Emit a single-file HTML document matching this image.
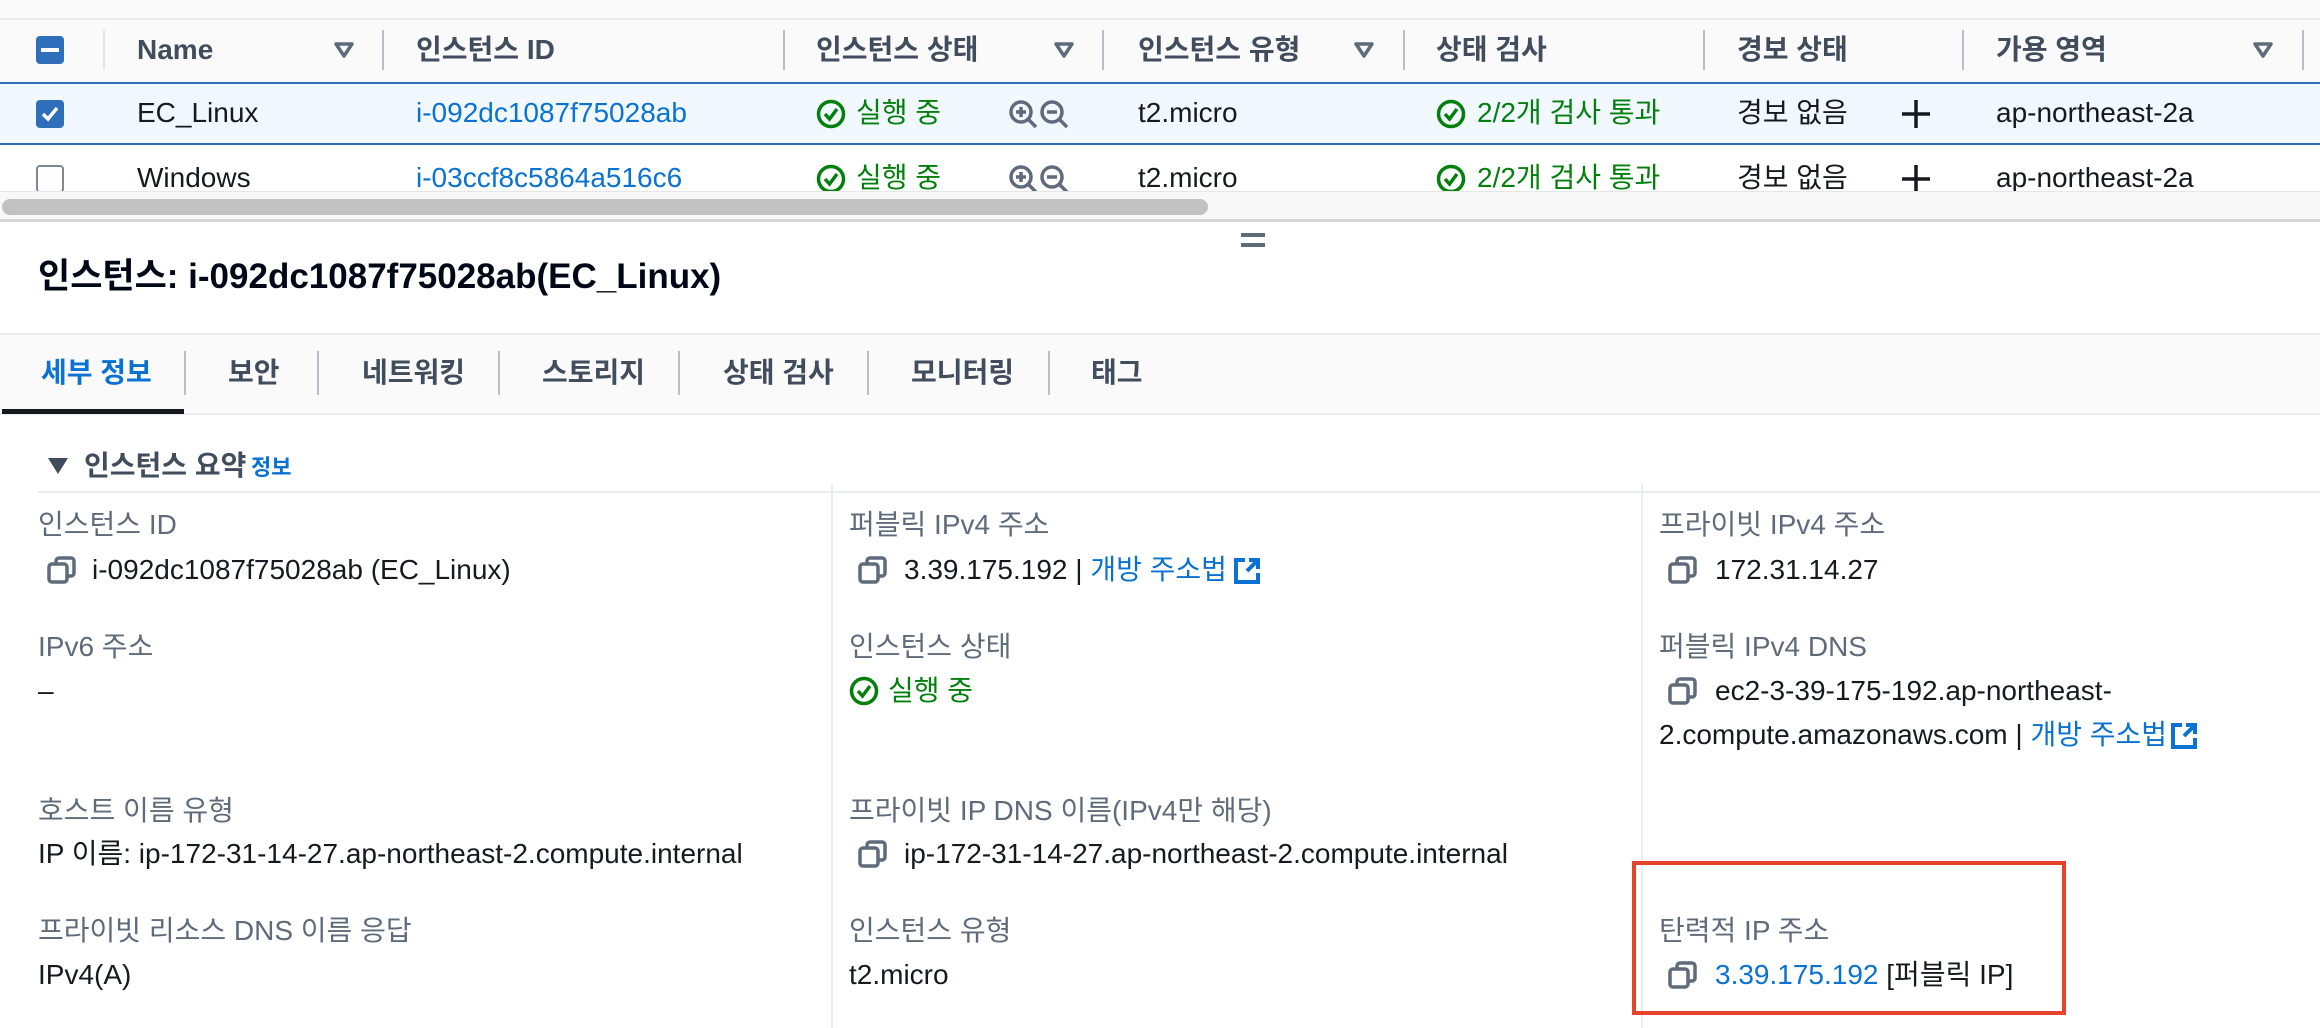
<!DOCTYPE html>
<html><head><meta charset="utf-8">
<style>
*{margin:0;padding:0;box-sizing:border-box}
body{width:2320px;height:1028px;background:#fff;position:relative;overflow:hidden;font-family:"Liberation Sans","Noto Sans CJK KR",sans-serif;font-size:28px;color:#16191f}
.a{position:absolute;white-space:nowrap;line-height:40px}
.h{font-weight:bold;color:#414d5c}
.lbl{color:#5f6b7a}
.blue{color:#0972d3}
.green{color:#037f0c}
.sep{position:absolute;width:2px;background:#b6bec9;top:30px;height:40px}
.tsep{position:absolute;width:2px;background:#b6bec9;top:351px;height:44px}
svg{position:absolute}
</style></head><body>
<!-- top table -->
<div style="position:absolute;left:0;top:0;width:2320px;height:82px;background:#fafafa;border-top:2px solid #e9ebed;margin-top:18px"></div>
<div style="position:absolute;left:0;top:0;width:2320px;height:18px;background:#fafafa"></div>
<div style="position:absolute;left:36px;top:36px;width:28px;height:28px;background:#2f6eba;border-radius:4px"></div>
<div style="position:absolute;left:41px;top:48px;width:18px;height:4px;background:#fff"></div>
<div class="sep" style="left:103px;background:#e2e4e7"></div>
<div class="a h" style="left:137px;top:30px">Name</div>
<div class="sep" style="left:382px"></div>
<div class="a h" style="left:416px;top:30px">인스턴스 ID</div>
<div class="sep" style="left:783px"></div>
<div class="a h" style="left:816px;top:30px">인스턴스 상태</div>
<div class="sep" style="left:1102px"></div>
<div class="a h" style="left:1138px;top:30px">인스턴스 유형</div>
<div class="sep" style="left:1403px"></div>
<div class="a h" style="left:1436px;top:30px">상태 검사</div>
<div class="sep" style="left:1703px"></div>
<div class="a h" style="left:1737px;top:30px">경보 상태</div>
<div class="sep" style="left:1962px"></div>
<div class="a h" style="left:1996px;top:30px">가용 영역</div>
<div class="sep" style="left:2302px"></div>
<svg style="left:334px;top:42px" width="20" height="16"><path d="M2 2h16l-8 12z" fill="none" stroke="#5f6b7a" stroke-width="3.5" stroke-linejoin="round"/></svg>
<svg style="left:1054px;top:42px" width="20" height="16"><path d="M2 2h16l-8 12z" fill="none" stroke="#5f6b7a" stroke-width="3.5" stroke-linejoin="round"/></svg>
<svg style="left:1354px;top:42px" width="20" height="16"><path d="M2 2h16l-8 12z" fill="none" stroke="#5f6b7a" stroke-width="3.5" stroke-linejoin="round"/></svg>
<svg style="left:2253px;top:42px" width="20" height="16"><path d="M2 2h16l-8 12z" fill="none" stroke="#5f6b7a" stroke-width="3.5" stroke-linejoin="round"/></svg>

<!-- row1 -->
<div style="position:absolute;left:0;top:82px;width:2320px;height:63px;background:#f1f8ff;border-top:2px solid #2f6eba;border-bottom:2px solid #2f6eba"></div>
<div style="position:absolute;left:36px;top:100px;width:28px;height:28px;background:#2f6eba;border-radius:4px"></div>
<svg style="left:36px;top:100px" width="28" height="28"><path d="M7 14l5 5 9-11" fill="none" stroke="#fff" stroke-width="3.5"/></svg>
<div class="a" style="left:137px;top:93px">EC_Linux</div>
<div class="a blue" style="left:416px;top:93px">i-092dc1087f75028ab</div>
<!-- row2 -->
<div style="position:absolute;left:0;top:145px;width:2320px;height:46px;overflow:hidden">
 <div style="position:absolute;left:36px;top:20px;width:28px;height:28px;border:2px solid #7d8998;border-radius:4px"></div>
 <div class="a" style="left:137px;top:13px">Windows</div>
 <div class="a blue" style="left:416px;top:13px">i-03ccf8c5864a516c6</div>
 <svg style="left:816px;top:19px" width="30" height="30"><circle cx="15" cy="15" r="12.5" fill="none" stroke="#037f0c" stroke-width="3.5"/><path d="M9 15l4.5 5 7.5-10" fill="none" stroke="#037f0c" stroke-width="3.5"/></svg>
 <div class="a green" style="left:856px;top:13px">실행 중</div>
 <svg style="left:1008px;top:19px" width="64" height="32"><circle cx="13" cy="13" r="10" fill="none" stroke="#5f6b7a" stroke-width="3.5"/><path d="M20 20l8 8M8 13h10M13 8v10" stroke="#5f6b7a" stroke-width="3.5"/><circle cx="44" cy="13" r="10" fill="none" stroke="#5f6b7a" stroke-width="3.5"/><path d="M51 20l8 8M39 13h10" stroke="#5f6b7a" stroke-width="3.5"/></svg>
 <div class="a" style="left:1138px;top:13px">t2.micro</div>
 <svg style="left:1436px;top:19px" width="30" height="30"><circle cx="15" cy="15" r="12.5" fill="none" stroke="#037f0c" stroke-width="3.5"/><path d="M9 15l4.5 5 7.5-10" fill="none" stroke="#037f0c" stroke-width="3.5"/></svg>
 <div class="a green" style="left:1477px;top:13px">2/2개 검사 통과</div>
 <div class="a" style="left:1737px;top:13px">경보 없음</div>
 <svg style="left:1901px;top:19px" width="30" height="30"><path d="M15 1v28M1 15h28" stroke="#16191f" stroke-width="3.5"/></svg>
 <div class="a" style="left:1996px;top:13px">ap-northeast-2a</div>
</div>
<svg style="left:816px;top:99px" width="30" height="30"><circle cx="15" cy="15" r="12.5" fill="none" stroke="#037f0c" stroke-width="3.5"/><path d="M9 15l4.5 5 7.5-10" fill="none" stroke="#037f0c" stroke-width="3.5"/></svg>
<div class="a green" style="left:856px;top:93px">실행 중</div>
<svg style="left:1008px;top:99px" width="64" height="32"><circle cx="13" cy="13" r="10" fill="none" stroke="#5f6b7a" stroke-width="3.5"/><path d="M20 20l8 8M8 13h10M13 8v10" stroke="#5f6b7a" stroke-width="3.5"/><circle cx="44" cy="13" r="10" fill="none" stroke="#5f6b7a" stroke-width="3.5"/><path d="M51 20l8 8M39 13h10" stroke="#5f6b7a" stroke-width="3.5"/></svg>
<div class="a" style="left:1138px;top:93px">t2.micro</div>
<svg style="left:1436px;top:99px" width="30" height="30"><circle cx="15" cy="15" r="12.5" fill="none" stroke="#037f0c" stroke-width="3.5"/><path d="M9 15l4.5 5 7.5-10" fill="none" stroke="#037f0c" stroke-width="3.5"/></svg>
<div class="a green" style="left:1477px;top:93px">2/2개 검사 통과</div>
<div class="a" style="left:1737px;top:93px">경보 없음</div>
<svg style="left:1901px;top:99px" width="30" height="30"><path d="M15 1v28M1 15h28" stroke="#16191f" stroke-width="3.5"/></svg>
<div class="a" style="left:1996px;top:93px">ap-northeast-2a</div>

<!-- scrollbar -->
<div style="position:absolute;left:0;top:191px;width:2320px;height:29px;background:#f8f8f8;border-top:1px solid #e6e6e6"></div>
<div style="position:absolute;left:2px;top:199px;width:1206px;height:16px;background:#c1c1c1;border-radius:8px"></div>
<div style="position:absolute;left:0;top:219px;width:2320px;height:3px;background:#d5d5d5"></div>
<div style="position:absolute;left:1241px;top:233px;width:24px;height:4px;background:#5f6b7a"></div>
<div style="position:absolute;left:1241px;top:243px;width:24px;height:4px;background:#5f6b7a"></div>

<!-- title -->
<div class="a" style="left:38px;top:257px;font-size:35px;font-weight:bold;color:#000716">인스턴스: i-092dc1087f75028ab(EC_Linux)</div>

<!-- tabs -->
<div style="position:absolute;left:0;top:333px;width:2320px;height:82px;background:#fafafa;border-top:2px solid #eaeded;border-bottom:2px solid #eaeded"></div>
<div class="a h blue" style="left:41px;top:353px;color:#0972d3">세부 정보</div>
<div class="tsep" style="left:184px"></div>
<div class="a h" style="left:228px;top:353px">보안</div>
<div class="tsep" style="left:317px"></div>
<div class="a h" style="left:362px;top:353px">네트워킹</div>
<div class="tsep" style="left:498px"></div>
<div class="a h" style="left:542px;top:353px">스토리지</div>
<div class="tsep" style="left:678px"></div>
<div class="a h" style="left:723px;top:353px">상태 검사</div>
<div class="tsep" style="left:867px"></div>
<div class="a h" style="left:911px;top:353px">모니터링</div>
<div class="tsep" style="left:1048px"></div>
<div class="a h" style="left:1091px;top:353px">태그</div>
<div style="position:absolute;left:2px;top:409px;width:182px;height:5px;background:#16191f"></div>

<!-- summary -->
<svg style="left:48px;top:458px" width="20" height="16"><path d="M0 0h20l-10 16z" fill="#414d5c"/></svg>
<div class="a h" style="left:84px;top:446px">인스턴스 요약</div>
<div class="a blue" style="left:251px;top:448px;font-size:22px;font-weight:bold">정보</div>
<div style="position:absolute;left:38px;top:491px;width:2282px;height:2px;background:#e9ebed"></div>
<div style="position:absolute;left:831px;top:483px;width:2px;height:545px;background:#eaeded"></div>
<div style="position:absolute;left:1641px;top:483px;width:2px;height:545px;background:#eaeded"></div>

<!-- col1 -->
<div class="a lbl" style="left:38px;top:505px">인스턴스 ID</div>
<svg style="left:47px;top:556px" width="30" height="28"><rect x="9" y="2" width="18" height="18" rx="3" fill="none" stroke="#5f6b7a" stroke-width="3.5"/><rect x="2" y="8" width="18" height="18" rx="3" fill="#fff" stroke="#5f6b7a" stroke-width="3.5"/></svg>
<div class="a" style="left:92px;top:550px">i-092dc1087f75028ab (EC_Linux)</div>
<div class="a lbl" style="left:38px;top:627px">IPv6 주소</div>
<div class="a" style="left:38px;top:671px">–</div>
<div class="a lbl" style="left:38px;top:791px">호스트 이름 유형</div>
<div class="a" style="left:38px;top:834px">IP 이름: ip-172-31-14-27.ap-northeast-2.compute.internal</div>
<div class="a lbl" style="left:38px;top:911px">프라이빗 리소스 DNS 이름 응답</div>
<div class="a" style="left:38px;top:955px">IPv4(A)</div>

<!-- col2 -->
<div class="a lbl" style="left:849px;top:505px">퍼블릭 IPv4 주소</div>
<svg style="left:858px;top:556px" width="30" height="28"><rect x="9" y="2" width="18" height="18" rx="3" fill="none" stroke="#5f6b7a" stroke-width="3.5"/><rect x="2" y="8" width="18" height="18" rx="3" fill="#fff" stroke="#5f6b7a" stroke-width="3.5"/></svg>
<div class="a" style="left:904px;top:550px">3.39.175.192 | <span class="blue">개방 주소법</span></div>
<svg style="left:1233px;top:557px" width="28" height="28"><path d="M12 3H3v22h22v-9" fill="none" stroke="#0972d3" stroke-width="4"/><path d="M14 14L25 3M16 3h9v9" fill="none" stroke="#0972d3" stroke-width="4"/></svg>
<div class="a lbl" style="left:849px;top:627px">인스턴스 상태</div>
<svg style="left:849px;top:676px" width="30" height="30"><circle cx="15" cy="15" r="12.5" fill="none" stroke="#037f0c" stroke-width="3.5"/><path d="M9 15l4.5 5 7.5-10" fill="none" stroke="#037f0c" stroke-width="3.5"/></svg>
<div class="a green" style="left:888px;top:671px">실행 중</div>
<div class="a lbl" style="left:849px;top:791px">프라이빗 IP DNS 이름(IPv4만 해당)</div>
<svg style="left:858px;top:840px" width="30" height="28"><rect x="9" y="2" width="18" height="18" rx="3" fill="none" stroke="#5f6b7a" stroke-width="3.5"/><rect x="2" y="8" width="18" height="18" rx="3" fill="#fff" stroke="#5f6b7a" stroke-width="3.5"/></svg>
<div class="a" style="left:904px;top:834px">ip-172-31-14-27.ap-northeast-2.compute.internal</div>
<div class="a lbl" style="left:849px;top:911px">인스턴스 유형</div>
<div class="a" style="left:849px;top:955px">t2.micro</div>

<!-- col3 -->
<div class="a lbl" style="left:1659px;top:505px">프라이빗 IPv4 주소</div>
<svg style="left:1668px;top:556px" width="30" height="28"><rect x="9" y="2" width="18" height="18" rx="3" fill="none" stroke="#5f6b7a" stroke-width="3.5"/><rect x="2" y="8" width="18" height="18" rx="3" fill="#fff" stroke="#5f6b7a" stroke-width="3.5"/></svg>
<div class="a" style="left:1715px;top:550px">172.31.14.27</div>
<div class="a lbl" style="left:1659px;top:627px">퍼블릭 IPv4 DNS</div>
<svg style="left:1668px;top:677px" width="30" height="28"><rect x="9" y="2" width="18" height="18" rx="3" fill="none" stroke="#5f6b7a" stroke-width="3.5"/><rect x="2" y="8" width="18" height="18" rx="3" fill="#fff" stroke="#5f6b7a" stroke-width="3.5"/></svg>
<div class="a" style="left:1715px;top:671px">ec2-3-39-175-192.ap-northeast-</div>
<div class="a" style="left:1659px;top:715px">2.compute.amazonaws.com | <span class="blue">개방 주소법</span></div>
<svg style="left:2170px;top:722px" width="28" height="28"><path d="M12 3H3v22h22v-9" fill="none" stroke="#0972d3" stroke-width="4"/><path d="M14 14L25 3M16 3h9v9" fill="none" stroke="#0972d3" stroke-width="4"/></svg>
<div style="position:absolute;left:1632px;top:861px;width:434px;height:154px;border:4px solid #e5432b"></div>
<div class="a lbl" style="left:1659px;top:911px">탄력적 IP 주소</div>
<svg style="left:1668px;top:961px" width="30" height="28"><rect x="9" y="2" width="18" height="18" rx="3" fill="none" stroke="#5f6b7a" stroke-width="3.5"/><rect x="2" y="8" width="18" height="18" rx="3" fill="#fff" stroke="#5f6b7a" stroke-width="3.5"/></svg>
<div class="a" style="left:1715px;top:955px"><span class="blue">3.39.175.192</span> [퍼블릭 IP]</div>
</body></html>
